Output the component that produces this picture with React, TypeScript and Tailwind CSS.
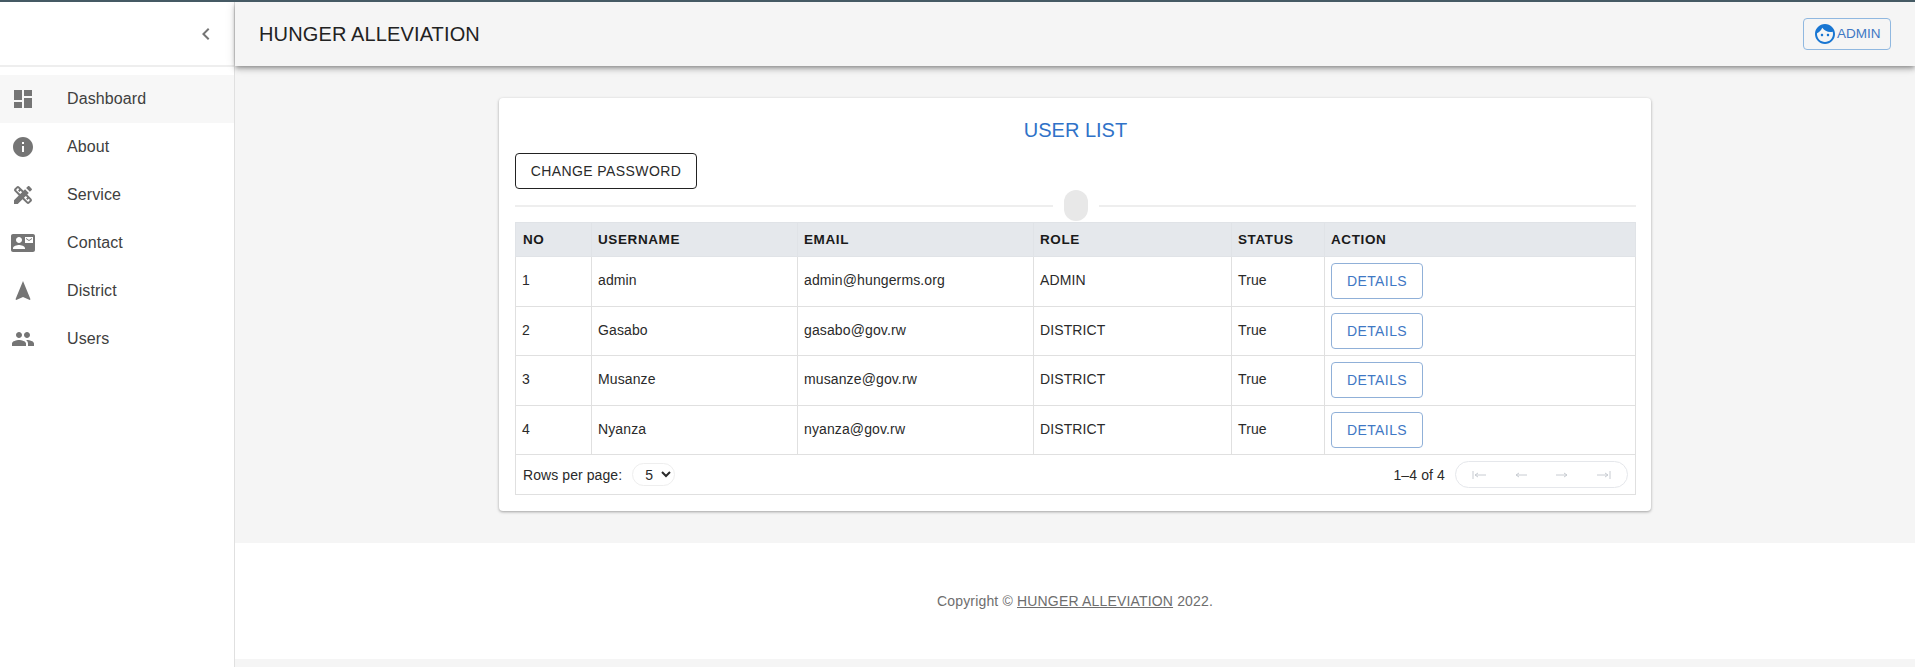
import React from 'react';

const navItems = [
    {label: 'Dashboard', path: 'M3 13h8V3H3v10zm0 8h8v-6H3v6zm10 0h8V11h-8v10zm0-18v6h8V3h-8z'},
    {label: 'About', path: 'M12 2C6.48 2 2 6.48 2 12s4.48 10 10 10 10-4.48 10-10S17.52 2 12 2zm1 15h-2v-6h2v6zm0-8h-2V7h2v2z'},
    {label: 'Service', path: 'M16.24 11.51l1.57-1.57-3.75-3.75-1.57 1.57-4.14-4.13c-.78-.78-2.05-.78-2.83 0l-1.9 1.9c-.78.78-.78 2.05 0 2.83l4.13 4.13L3 17.25V21h3.75l4.76-4.76 4.13 4.13c.95.95 2.23.6 2.83 0l1.9-1.9c.78-.78.78-2.05 0-2.83l-4.13-4.13zm-7.06-.44L5.04 6.94l1.89-1.9L8.2 6.31 7.02 7.5l1.41 1.41 1.19-1.19 1.45 1.45-1.89 1.9zm7.88 7.89l-4.13-4.13 1.9-1.9 1.45 1.45-1.19 1.19 1.41 1.41 1.19-1.19 1.27 1.27-1.9 1.9zM20.71 7.04c.39-.39.39-1.02 0-1.41l-2.34-2.34c-.47-.47-1.12-.29-1.41 0l-1.83 1.83 3.75 3.75 1.83-1.83z'},
    {label: 'Contact', path: 'M21 8V7l-3 2-3-2v1l3 2 3-2zm1-5H2C.9 3 0 3.9 0 5v14c0 1.1.9 2 2 2h20c1.1 0 1.99-.9 1.99-2L24 5c0-1.1-.9-2-2-2zM8 6c1.66 0 3 1.34 3 3s-1.34 3-3 3-3-1.34-3-3 1.34-3 3-3zm6 12H2v-1c0-2 4-3.1 6-3.1s6 1.1 6 3.1v1zm8-6h-8V6h8v6z'},
    {label: 'District', path: 'M12 2L4.5 20.29l.71.71L12 18l6.79 3 .71-.71z'},
    {label: 'Users', path: 'M16 11c1.66 0 2.99-1.34 2.99-3S17.66 5 16 5c-1.66 0-3 1.34-3 3s1.34 3 3 3zm-8 0c1.66 0 2.99-1.34 2.99-3S9.66 5 8 5C6.34 5 5 6.34 5 8s1.34 3 3 3zm0 2c-2.33 0-7 1.17-7 3.5V19h14v-2.5c0-2.33-4.67-3.5-7-3.5zm8 0c-.29 0-.62.02-.97.05 1.16.84 1.97 1.97 1.97 3.45V19h6v-2.5c0-2.33-4.67-3.5-7-3.5z'},
];

const users = [
    {no: 1, username: 'admin', email: 'admin@hungerms.org', role: 'ADMIN', status: 'True'},
    {no: 2, username: 'Gasabo', email: 'gasabo@gov.rw', role: 'DISTRICT', status: 'True'},
    {no: 3, username: 'Musanze', email: 'musanze@gov.rw', role: 'DISTRICT', status: 'True'},
    {no: 4, username: 'Nyanza', email: 'nyanza@gov.rw', role: 'DISTRICT', status: 'True'},
];

const headers = ['NO', 'USERNAME', 'EMAIL', 'ROLE', 'STATUS', 'ACTION'];

const Icon: React.FC<{path: string; className?: string}> = ({path, className}) => (
    <svg viewBox="0 0 24 24" className={className} fill="currentColor">
        <path d={path}/>
    </svg>
);

const PageArrow: React.FC<{d: string}> = ({d}) => (
    <button className="w-[41px] h-full flex items-center justify-center">
        <svg viewBox="0 0 16 10" className="w-4 h-[10px]" fill="none" stroke="#c8ccd2" strokeWidth="1">
            <path d={d}/>
        </svg>
    </button>
);

const Sidebar: React.FC = () => (
    <aside className="w-[235px] shrink-0 bg-white border-r border-[#e0e0e0] flex flex-col">
        <div className="h-[65px] shrink-0 border-b-2 border-[#eeeeee] flex items-center justify-end pr-[16px]">
            <Icon path="M15.41 7.41L14 6l-6 6 6 6 1.41-1.41L10.83 12z" className="w-6 h-6 text-[#757575]"/>
        </div>
        <nav className="pt-2">
            {navItems.map((item, i) => (
                <div key={item.label} className={`h-12 flex items-center pl-[11px] ${i === 0 ? 'bg-[#f7f7f7]' : ''}`}>
                    <Icon path={item.path} className="w-6 h-6 text-[#757575]"/>
                    <span className="ml-[32px] text-base tracking-[0.1px] text-[#404040]">{item.label}</span>
                </div>
            ))}
        </nav>
    </aside>
);

const TopBar: React.FC = () => (
    <header className="h-[64px] shrink-0 bg-[#f5f5f5] flex items-center justify-between pl-[24px] pr-[24px] shadow-[0_2px_4px_-1px_rgba(0,0,0,0.3),0_4px_5px_0_rgba(0,0,0,0.14),0_1px_10px_0_rgba(0,0,0,0.12)] relative">
        <h1 className="text-xl tracking-[0.13px] text-[#222222]">HUNGER ALLEVIATION</h1>
        <button className="h-[32px] w-[88px] rounded border border-[#90b8e0] flex items-center pl-[9px] text-[13.5px] text-[#3f78c4]">
            <Icon path="M9 11.75c-.69 0-1.25.56-1.25 1.25s.56 1.25 1.25 1.25 1.25-.56 1.25-1.25-.56-1.25-1.25-1.25zm6 0c-.69 0-1.25.56-1.25 1.25s.56 1.25 1.25 1.25 1.25-.56 1.25-1.25-.56-1.25-1.25-1.25zM12 2C6.48 2 2 6.48 2 12s4.48 10 10 10 10-4.48 10-10S17.52 2 12 2zm0 18c-4.41 0-8-3.59-8-8 0-.29.02-.58.05-.86 2.36-1.05 4.23-2.98 5.21-5.37C11.07 8.33 14.05 10 17.42 10c.78 0 1.53-.09 2.25-.26.21.71.33 1.47.33 2.26 0 4.41-3.59 8-8 8z" className="w-6 h-6 text-[#1976d2]"/>
            <span>ADMIN</span>
        </button>
    </header>
);

const UserTable: React.FC = () => (
    <table className="w-full table-fixed border-collapse text-sm tracking-[0.12px] text-[#2a2a2a]">
        <colgroup>
            <col className="w-[76px]"/>
            <col className="w-[206px]"/>
            <col className="w-[236px]"/>
            <col className="w-[198px]"/>
            <col className="w-[93px]"/>
            <col/>
        </colgroup>
        <thead>
            <tr className="h-[34px] bg-[#e5e8ec]">
                {headers.map((h, i) => (
                    <th key={h} className={`border border-[#e0e3e7] pr-[6px] text-left font-bold tracking-[0.6px] text-[#1a1a1a] text-[13.5px] ${i === 0 ? 'pl-[7px]' : 'pl-[6px]'}`}>{h}</th>
                ))}
            </tr>
        </thead>
        <tbody>
            {users.map(u => (
                <tr key={u.no} className="h-[49.5px]">
                    <td className="border border-[#e0e0e0] pl-[6px] pr-[6px] pb-[2px]">{u.no}</td>
                    <td className="border border-[#e0e0e0] px-[6px] pb-[2px]">{u.username}</td>
                    <td className="border border-[#e0e0e0] px-[6px] pb-[2px]">{u.email}</td>
                    <td className="border border-[#e0e0e0] px-[6px] pb-[2px]">{u.role}</td>
                    <td className="border border-[#e0e0e0] px-[6px] pb-[2px]">{u.status}</td>
                    <td className="border border-[#e0e0e0] px-[6px]">
                        <button className="h-[36px] w-[92px] rounded border border-[#90b0d8] text-sm tracking-[0.4px] text-[#3f78c4]">DETAILS</button>
                    </td>
                </tr>
            ))}
        </tbody>
        <tfoot>
            <tr className="h-[40px]">
                <td colSpan={6} className="border border-[#e0e0e0] pl-[7px] pr-[6px]">
                    <div className="flex items-center justify-between pr-[1px]">
                        <div className="flex items-center">
                            <span className="tracking-[0.08px]">Rows per page:</span>
                            <select className="ml-[10px] w-[43px] h-[23px] rounded-full border border-[#eeeeee] pl-[8px] bg-white text-sm" defaultValue="5">
                                <option>5</option>
                                <option>10</option>
                                <option>25</option>
                            </select>
                        </div>
                        <div className="flex items-center">
                            <span className="mr-[10px]">1–4 of 4</span>
                            <div className="w-[173px] h-[27px] rounded-full border border-[#e5e7eb] flex items-center justify-center">
                                <PageArrow d="M1 1v8M3 5h11M3 5l3-2M3 5l3 2"/>
                                <PageArrow d="M3 5h11M3 5l3-2M3 5l3 2"/>
                                <PageArrow d="M2 5h11M13 5l-3-2M13 5l-3 2"/>
                                <PageArrow d="M2 5h11M13 5l-3-2M13 5l-3 2M15 1v8"/>
                            </div>
                        </div>
                    </div>
                </td>
            </tr>
        </tfoot>
    </table>
);

export default function App() {
    return (
        <div className="h-screen overflow-hidden border-t-2 border-[#455a64] flex font-['Liberation_Sans',Arial,sans-serif]">
            <Sidebar/>
            <div className="flex-1 min-w-0 flex flex-col bg-[#f5f5f5]">
                <TopBar/>
                <main className="h-[477px] shrink-0 flex justify-center pt-8">
                    <section className="w-[1152px] h-[413px] bg-white rounded pl-4 pr-[15px] pt-4 shadow-[0_1px_3px_rgba(0,0,0,0.35)]">
                        <h2 className="text-xl text-center text-[#2f72c8] leading-[20px] mt-[6px]">USER LIST</h2>
                        <button className="mt-[13px] block h-[36px] w-[182px] rounded border border-[#222222] text-sm tracking-[0.4px] text-[#2a2a2a]">CHANGE PASSWORD</button>
                        <div className="flex items-center h-[33px]">
                            <div className="flex-1 h-[2px] bg-[#eeeeee]"/>
                            <div className="mx-[11px] w-[24px] h-[31px] rounded-full bg-[#e8e8e8]"/>
                            <div className="flex-1 h-[2px] bg-[#eeeeee]"/>
                        </div>
                        <UserTable/>
                    </section>
                </main>
                <footer className="h-[116px] shrink-0 bg-white flex items-center justify-center text-sm tracking-[0.17px] text-[#6e6e6e]">
                    <span>Copyright © <a className="underline">HUNGER ALLEVIATION</a> 2022.</span>
                </footer>
            </div>
        </div>
    );
}
